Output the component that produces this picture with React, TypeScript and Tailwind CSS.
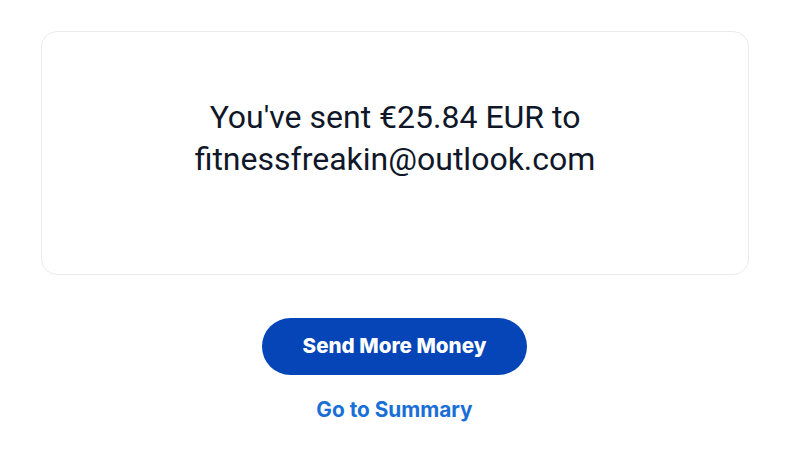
export default function App() {
  return (
    <div className="w-[800px] h-[470px] bg-white pt-[31px] font-['Roboto',sans-serif]">
      <div className="ml-[41px] w-[708px] h-[244px] rounded-[16px] border border-[#ececec] flex flex-col items-center justify-center pb-[30px]">
        <p className="text-[32px] leading-[42px] text-[#0f1729] text-center">
          You've sent €25.84 EUR to
          <br />
          fitnessfreakin@outlook.com
        </p>
      </div>
      <div className="flex flex-col items-center mt-[43px] mr-[11px]">
        <button className="w-[265px] h-[57px] rounded-full bg-[#0545b8] text-white text-[20.6px] font-extrabold font-['Inter',sans-serif]">
          Send More Money
        </button>
        <a className="mt-[21px] text-[20.8px] font-bold text-[#1a6fd6] font-['Inter',sans-serif] leading-[28px]">
          Go to Summary
        </a>
      </div>
    </div>
  );
}
